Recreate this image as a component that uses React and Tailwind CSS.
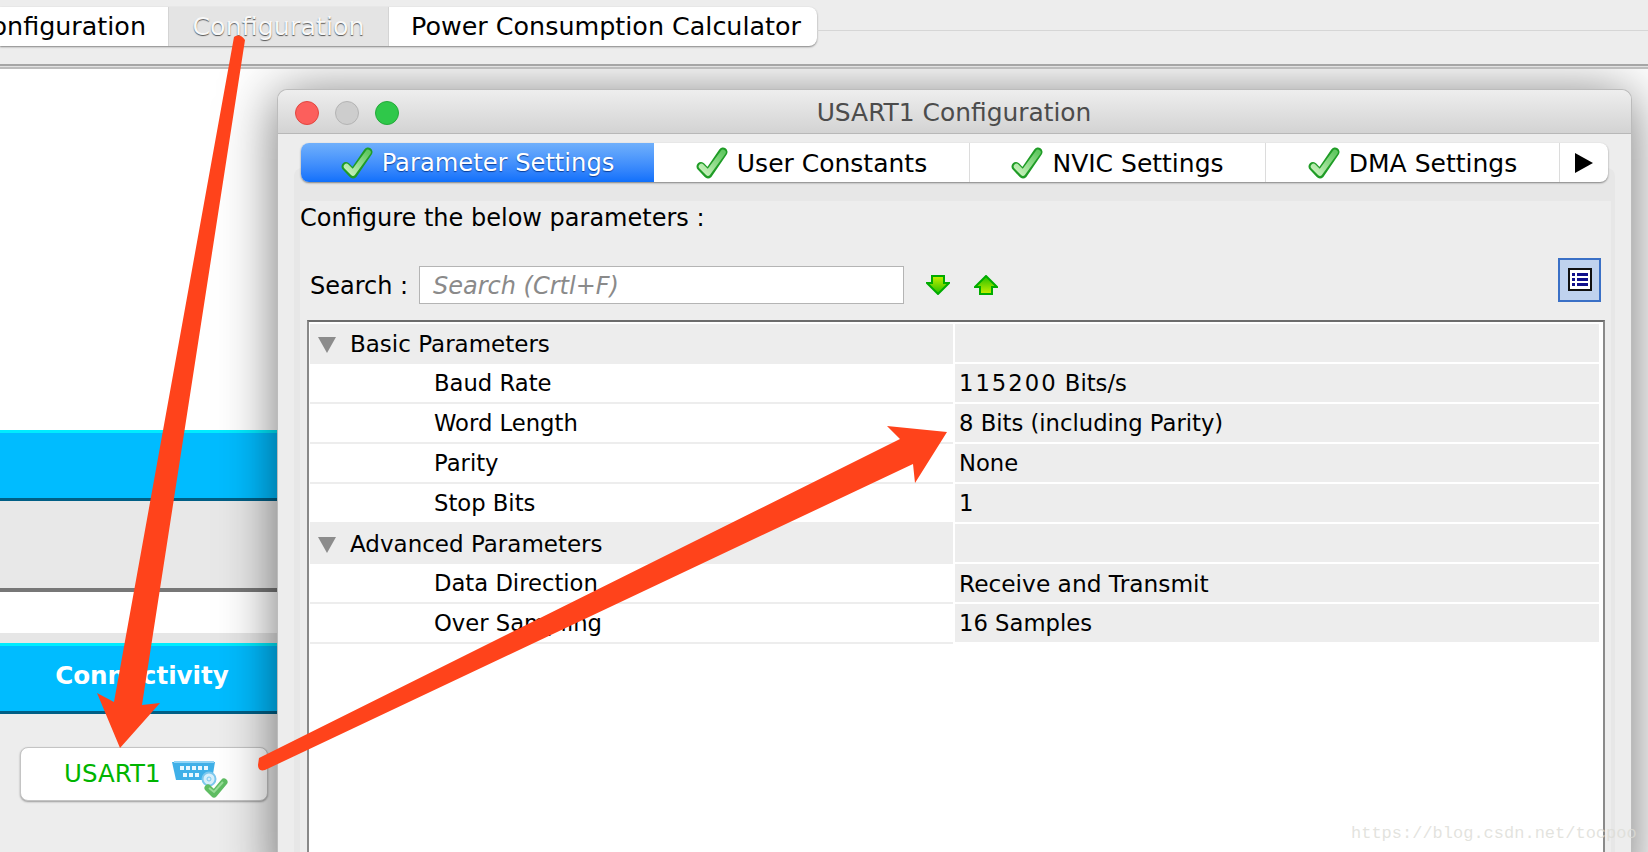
import React from "react";

function Check({ id }) {
  return (
    <svg width="32" height="32" viewBox="0 0 32 32" className="shrink-0">
      <defs>
        <linearGradient id={id} x1="0" y1="1" x2="1" y2="0">
          <stop offset="0" stopColor="#c8f2bc" />
          <stop offset="1" stopColor="#62c862" />
        </linearGradient>
      </defs>
      <path d="M5 19.500 L12 27 L27 5" fill="none" stroke="#1f9c26" strokeWidth="9" strokeLinecap="round" strokeLinejoin="round" />
      <path d="M5.500 19.500 L12 26 L27 5.500" fill="none" stroke={`url(#${id})`} strokeWidth="5.500" strokeLinecap="round" strokeLinejoin="round" />
    </svg>
  );
}

function Tab({ id, label, className, textClass = "" }) {
  return (
    <div className={`flex items-center justify-center gap-[9px] ${className}`}>
      <Check id={id} />
      <span className={`mt-[2px] ${textClass}`}>{label}</span>
    </div>
  );
}

function GreenArrow({ up }) {
  const id = up ? "ga-up" : "ga-down";
  return (
    <svg width="24" height="20" viewBox="0 0 24 20" className="shrink-0">
      <defs>
        <linearGradient id={id} x1="0" y1="0" x2="0" y2="1">
          <stop offset="0" stopColor={up ? "#22c000" : "#c8f000"} />
          <stop offset="1" stopColor={up ? "#c8f000" : "#22c000"} />
        </linearGradient>
      </defs>
      <polygon
        points={up ? "12,1 23,12 18,12 18,19 6,19 6,12 1,12" : "6,1 18,1 18,8 23,8 12,19 1,8 6,8"}
        fill={`url(#${id})`}
        stroke="#00ac00"
        strokeWidth="2"
      />
    </svg>
  );
}

function Row({ label, value }) {
  return (
    <div className="flex h-[40px] shrink-0 text-[22.7px]">
      <div className="w-[643px] pl-[124px] pt-[1px] border-b-2 border-[#ededed] flex items-center bg-white">{label}</div>
      <div className="ml-[2px] flex-1 pl-[4px] pt-[1px] border-b-2 border-white flex items-center bg-[#ededed]">{value}</div>
    </div>
  );
}

function Group({ label }) {
  return (
    <div className="flex h-[40px] shrink-0 text-[23px]">
      <div className="w-[643px] flex items-center pt-[1px] bg-[#ededed]">
        <svg width="18" height="16" viewBox="0 0 18 16" className="ml-[8px] mr-[14px]">
          <polygon points="0,0 18,0 9,16" fill="#8c8c8c" />
        </svg>
        {label}
      </div>
      <div className="ml-[2px] flex-1 border-b-2 border-white bg-[#ededed]" />
    </div>
  );
}

function Band({ label }) {
  return (
    <div className="h-[71px] shrink-0 bg-[#00bcff] border-t-[3px] border-t-[#00ecff] border-b-[3px] border-b-[#005f86] flex items-center justify-center">
      {label && <span className="text-white font-bold text-[24.6px] ml-[7px] mb-[4px]">{label}</span>}
    </div>
  );
}

export default function App() {
  return (
    <div className="relative w-[1648px] h-[852px] overflow-hidden bg-white flex flex-col text-black text-[24px] leading-none font-['DejaVu_Sans',sans-serif]">
      {/* top toolbar */}
      <header className="relative z-10 h-[69px] shrink-0 bg-[#ededed] flex flex-col">
        <div className="relative h-[64px]">
          <div className="absolute left-[817px] right-0 top-[30px] h-px bg-[#d6d6d6]" />
          <div className="flex h-[39px] mt-[7px] w-[817px] ml-0 rounded-r-lg bg-white shadow-[0_1px_2px_rgba(0,0,0,0.45)] overflow-hidden text-[25.4px]">
            <div className="w-[168px] shrink-0 flex items-center justify-end pr-[22px] overflow-hidden whitespace-nowrap">Configuration</div>
            <div className="w-[221px] shrink-0 bg-[#e4e4e4] border-x border-[#d4d4d4] flex items-center justify-center text-[#f8f8f8] [text-shadow:0_1px_1px_#555]">Configuration</div>
            <div className="flex-1 flex items-center justify-center pl-[6px]">Power Consumption Calculator</div>
          </div>
        </div>
        <div className="h-[2px] bg-[#a6a6a6]" />
        <div className="h-px bg-[#e2e2e2]" />
        <div className="h-[2px] bg-[#bdbdbd]" />
      </header>

      {/* left panel */}
      <div className="w-[277px] flex-1 flex flex-col">
        <div className="h-[361px] shrink-0 bg-white" />
        <Band />
        <div className="h-[87px] shrink-0 bg-[#e8e8e8]" />
        <div className="h-[4px] shrink-0 bg-[#777]" />
        <div className="h-[41px] shrink-0 bg-white" />
        <div className="h-[10px] shrink-0 bg-[#e6e6e6]" />
        <Band label="Connectivity" />
        <div className="flex-1 bg-[#ededed] pt-[33px] pl-[20px] pr-[9px]">
          <div className="h-[54px] rounded-lg bg-white border border-[#c4c4c4] shadow-[0_1px_2px_rgba(0,0,0,0.35)] flex items-center pl-[43px] text-[#00b400] text-[24.5px]">
            <span>USART1</span>
            <svg width="56" height="40" viewBox="0 0 56 40" className="ml-[11px] mt-[13px] shrink-0">
              <polygon points="0,1 43,1 40,19 4,19" fill="#3fb0e8" />
              <rect x="2" y="0" width="40" height="2" fill="#8fd4f6" />
              {[8, 14, 20, 26, 32].map((x) => (
                <rect key={x} x={x} y="5" width="4" height="4" fill="#e8f8ff" />
              ))}
              {[11, 17, 23].map((x) => (
                <rect key={x} x={x} y="12" width="4" height="4" fill="#e8f8ff" />
              ))}
              <circle cx="37" cy="18" r="6.500" fill="#d6effb" stroke="#7cc8ee" strokeWidth="2" />
              <circle cx="37" cy="18" r="2" fill="none" stroke="#7cc8ee" />
              <path d="M36 27 L42 33 L52 21" fill="none" stroke="#5fbd63" strokeWidth="7" strokeLinejoin="round" strokeLinecap="round" />
              <path d="M37 27 L42 31 L51 21" fill="none" stroke="#98dd98" strokeWidth="2" />
            </svg>
          </div>
        </div>
      </div>

      {/* dialog window */}
      <div className="absolute left-[277px] top-[89px] w-[1355px] h-[800px] rounded-t-[10px] bg-[#ededed] border border-[#bcbcbc] border-b-0 shadow-[0_6px_55px_rgba(0,0,0,0.55)] flex flex-col">
        <div className="relative h-[44px] shrink-0 rounded-t-[10px] bg-gradient-to-b from-[#eeeeee] to-[#d3d3d3] border-b border-[#b8b8b8] flex items-center justify-center text-[#4c4c4c] text-[24.9px]">
          <div className="absolute left-[17px] top-[11px] flex gap-[16px]">
            <span className="w-[24px] h-[24px] rounded-full bg-[#fc5f5c] border border-[#e2463f]" />
            <span className="w-[24px] h-[24px] rounded-full bg-[#cdcdcd] border border-[#b4b4b4]" />
            <span className="w-[24px] h-[24px] rounded-full bg-[#2fc84a] border border-[#24a93a]" />
          </div>
          <span className="mt-[4px] ml-[-1px]">USART1 Configuration</span>
        </div>

        <div className="relative z-10 ml-[23px] mr-[23px] mt-[9px] mb-[-14px] h-[39px] shrink-0 flex rounded-lg bg-white shadow-[0_1px_2px_rgba(0,0,0,0.45)] text-[25px]">
          <Tab id="c1" label="Parameter Settings" textClass="text-white text-[24.2px] [text-shadow:0_1px_1px_#0a3f9c]" className="w-[353px] rounded-l-lg bg-gradient-to-b from-[#70b0fb] to-[#0f70fb]" />
          <Tab id="c2" label="User Constants" className="w-[316px] border-r border-[#dcdcdc]" />
          <Tab id="c3" label="NVIC Settings" className="w-[296px] border-r border-[#dcdcdc]" />
          <Tab id="c4" label="DMA Settings" className="w-[294px] border-r border-[#dcdcdc]" />
          <div className="flex-1 flex items-center justify-center">
            <svg width="18" height="20" viewBox="0 0 18 20">
              <polygon points="0,0 18,10 0,20" fill="#000" />
            </svg>
          </div>
        </div>

        <div className="flex-1 ml-[16px] mr-[16px] rounded-t-lg bg-[#e7e7e7] pt-[33px] pl-[6px] pr-[4px] flex flex-col">
          <div className="flex-1 bg-[#ededed] flex flex-col">
            <div className="h-[34px] shrink-0 flex items-center">Configure the below parameters :</div>
            <div className="relative h-[86px] shrink-0 flex items-center pl-[10px] pt-[13px] pb-[1px] mt-[-1px]">
              <span className="w-[109px] shrink-0 mt-[5px]">Search :</span>
              <div className="w-[485px] h-[38px] mt-[4px] bg-white border border-[#b4b4b4] pl-[13px] pt-[1px] flex items-center italic text-[#8a8a8a]">Search (Crtl+F)</div>
              <div className="ml-[22px] mt-[4px] flex gap-[24px]">
                <GreenArrow />
                <GreenArrow up />
              </div>
              <div className="ml-auto mr-[10px] mb-[7px] w-[43px] h-[44px] bg-[#bfd2ee] border-2 border-[#3a70c6] flex items-center justify-center">
                <svg width="24" height="23" viewBox="0 0 24 23">
                  <rect x="1" y="1" width="22" height="21" fill="#fff" stroke="#111" strokeWidth="2" />
                  {[5, 10, 15].map((y) => (
                    <g key={y}>
                      <rect x="4" y={y} width="3" height="3" fill="#10108c" />
                      <rect x="9" y={y} width="11" height="3" fill="#10108c" />
                    </g>
                  ))}
                </svg>
              </div>
            </div>
            <div className="ml-[7px] mr-[6px] flex-1 bg-white border-2 border-[#6c6c6c] border-l-[#8a8a8a] border-r-[#8a8a8a] pl-[1px] pr-[4px] pt-[2px] flex flex-col">
              <Group label="Basic Parameters" />
              <Row label="Baud Rate" value={<span><span className="tracking-[2px]">115200</span> Bits/s</span>} />
              <Row label="Word Length" value="8 Bits (including Parity)" />
              <Row label="Parity" value="None" />
              <Row label="Stop Bits" value="1" />
              <Group label="Advanced Parameters" />
              <Row label="Data Direction" value={<span className="text-[23.3px]">Receive and Transmit</span>} />
              <Row label="Over Sampling" value="16 Samples" />
            </div>
          </div>
        </div>
      </div>

      {/* red annotation arrows */}
      <svg className="absolute left-0 top-0 z-20 pointer-events-none" width="1648" height="852" viewBox="0 0 1648 852">
        <path
          d="M234 37 Q240 33 245 40 L142 705 L160 703 L120 748 L97 693 L114 702 Z"
          fill="#ff431b"
        />
        <path
          d="M259 758 L900 439 L887 426 L947 432 L915 483 L913 464 L265 770 Q258 772 258 765 Z"
          fill="#ff431b"
        />
      </svg>

      {/* watermark */}
      <div className="absolute z-30 left-[1351px] top-[824px] text-[17px] leading-[20px] whitespace-nowrap text-[#dcdcd6]/80 font-['Liberation_Mono',monospace]">
        https://blog.csdn.net/tocpoo
      </div>
    </div>
  );
}
